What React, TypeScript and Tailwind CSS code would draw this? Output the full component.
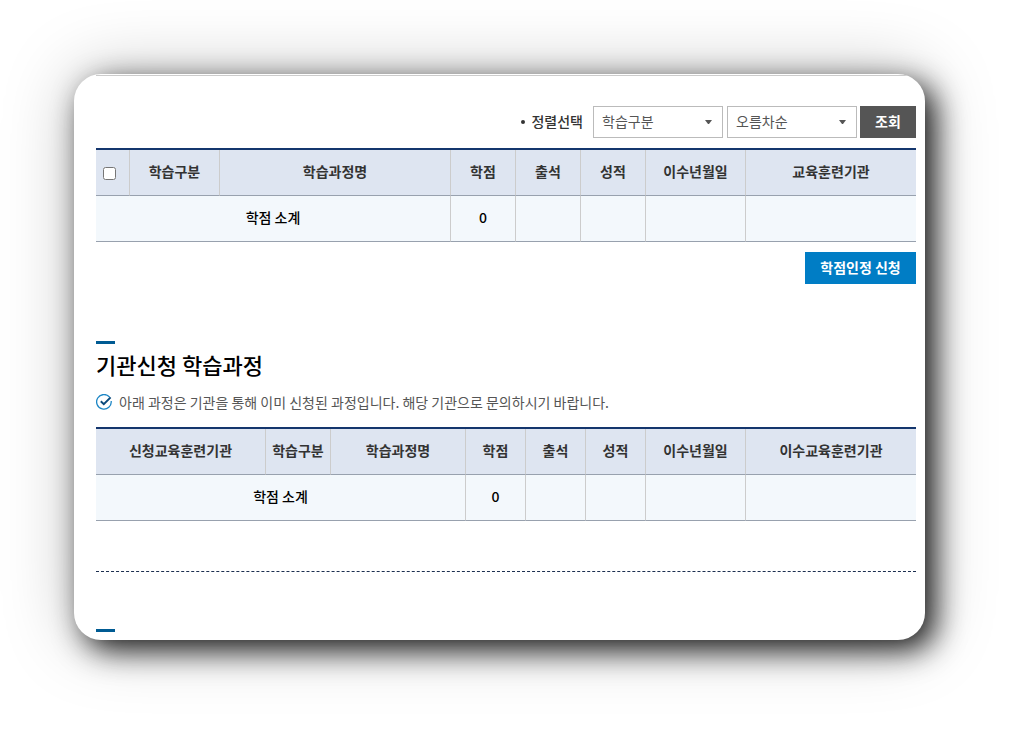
import type { ReactNode } from "react";

type Column = { label: ReactNode; width: string };

const selectableColumns: Column[] = [
  {
    label: (
      <input
        type="checkbox"
        aria-label="전체 선택"
        className="ml-[7px] mt-1.5 block size-[13px]"
      />
    ),
    width: "w-[34px]",
  },
  { label: "학습구분", width: "w-[90px]" },
  { label: "학습과정명", width: "" },
  { label: "학점", width: "w-[65px]" },
  { label: "출석", width: "w-[65px]" },
  { label: "성적", width: "w-[65px]" },
  { label: "이수년월일", width: "w-[100px]" },
  { label: "교육훈련기관", width: "w-[170px]" },
];

const institutionColumns: Column[] = [
  { label: "신청교육훈련기관", width: "w-[170px]" },
  { label: "학습구분", width: "w-[65px]" },
  { label: "학습과정명", width: "" },
  { label: "학점", width: "w-[60px]" },
  { label: "출석", width: "w-[60px]" },
  { label: "성적", width: "w-[60px]" },
  { label: "이수년월일", width: "w-[100px]" },
  { label: "이수교육훈련기관", width: "w-[170px]" },
];

function CreditTable({ columns, name }: { columns: Column[]; name: string }) {
  return (
    <table
      aria-label={name}
      className="w-full table-fixed border-separate border-spacing-0 border-t-2 border-[#14366d] text-center text-sm"
    >
      <thead>
        <tr className="h-[46px] bg-[#dee5f1] text-[#333]">
          {columns.map((column, i) => (
            <th
              key={i}
              scope="col"
              className={`${column.width} whitespace-nowrap border-b border-r border-b-[#98a1ae] border-r-[#ccc] p-0 pb-1 font-bold last:border-r-0`}
            >
              {column.label}
            </th>
          ))}
        </tr>
      </thead>
      <tbody>
        <tr className="h-[46px] bg-[#f3f8fc] font-medium text-black">
          <td colSpan={3} className="border-b border-r border-b-[#98a1ae] border-r-[#ccc] p-0 pb-1">
            학점 소계
          </td>
          <td className="border-b border-r border-b-[#98a1ae] border-r-[#ccc] p-0 pb-1">0</td>
          <td className="border-b border-r border-b-[#98a1ae] border-r-[#ccc] p-0" />
          <td className="border-b border-r border-b-[#98a1ae] border-r-[#ccc] p-0" />
          <td className="border-b border-r border-b-[#98a1ae] border-r-[#ccc] p-0" />
          <td className="border-b border-b-[#98a1ae] p-0" />
        </tr>
      </tbody>
    </table>
  );
}

function SortSelect({ id, name, options }: { id: string; name: string; options: string[] }) {
  return (
    <div className="relative">
      <select
        id={id}
        aria-label={name}
        className="block h-8 w-[130px] appearance-none border border-[#bbb] bg-white pb-0.5 pl-2 pr-6 text-sm text-[#555]"
      >
        {options.map((option) => (
          <option key={option}>{option}</option>
        ))}
      </select>
      <svg
        viewBox="0 0 7 4"
        aria-hidden="true"
        className="pointer-events-none absolute right-[11px] top-3.5 h-1 w-[7px] fill-[#555]"
      >
        <path d="M0 0h7L4 4H3z" />
      </svg>
    </div>
  );
}

function CheckMark() {
  return (
    <svg viewBox="0 0 16 16" aria-hidden="true" className="size-4 shrink-0" fill="none">
      <path
        d="M13.6 3.2A7.3 7.3 0 1 0 15.2 7"
        stroke="#1c86c5"
        strokeWidth="1.3"
      />
      <path d="M4.8 7.3 7.8 10.2 14.6 3.4" stroke="#0b4a7c" strokeWidth="2" />
    </svg>
  );
}

export default function App() {
  return (
    <main className="overflow-hidden bg-white pb-[94px] pl-[74px] pr-[94px] pt-[74px] font-['Noto_Sans_CJK_KR',sans-serif]">
      <div className="overflow-hidden rounded-[27px] bg-white pb-2 pl-[22px] pt-px shadow-[10px_10px_30px_rgba(0,0,0,0.88),0px_0px_70px_rgba(0,0,0,0.25)]">
        <div className="border-t border-[#ccc] pr-[9px]">
          <form className="flex items-center justify-end pt-[30px]" onSubmit={(e) => e.preventDefault()}>
            <label htmlFor="sort-field" className="mr-2.5 flex items-center gap-1.5 pb-0.5 text-sm font-medium text-[#333]">
              <span aria-hidden="true" className="mt-0.5 size-1 rounded-full bg-[#333]" />
              정렬선택
            </label>
            <div className="flex gap-1">
              <SortSelect id="sort-field" name="정렬선택" options={["학습구분", "학습과정명"]} />
              <SortSelect id="sort-order" name="정렬순서" options={["오름차순", "내림차순"]} />
            </div>
            <button type="submit" className="ml-[3px] h-8 w-14 bg-[#555] pb-0.5 text-sm font-bold text-white">
              조회
            </button>
          </form>

          <div className="pt-2.5">
            <CreditTable columns={selectableColumns} name="학습과정" />
          </div>
          <div className="flex justify-end pt-2.5">
            <button type="button" className="h-8 w-[111px] bg-[#007dc5] pb-0.5 text-sm font-bold text-white">
              학점인정 신청
            </button>
          </div>

          <section className="pt-[57px]">
            <div className="h-[3px] w-[19px] bg-[#005b93]" />
            <h2 className="pt-1 text-[22px] font-medium leading-8 text-black">기관신청 학습과정</h2>
            <p className="flex h-11 items-center gap-[7px] text-sm text-[#555]">
              <CheckMark />
              <span>
                아래 과정은 기관을 통해 이미 신청된 과정입니다. 해당 기관으로 문의하시기 바랍니다.
              </span>
            </p>
            <div className="pt-[3px]">
              <CreditTable columns={institutionColumns} name="기관신청 학습과정" />
            </div>
          </section>

          <hr className="mt-[50px] border-t border-dashed border-[#1c2f50]" />
          <div className="mt-[57px] h-[3px] w-[19px] bg-[#005b93]" />
        </div>
      </div>
    </main>
  );
}
